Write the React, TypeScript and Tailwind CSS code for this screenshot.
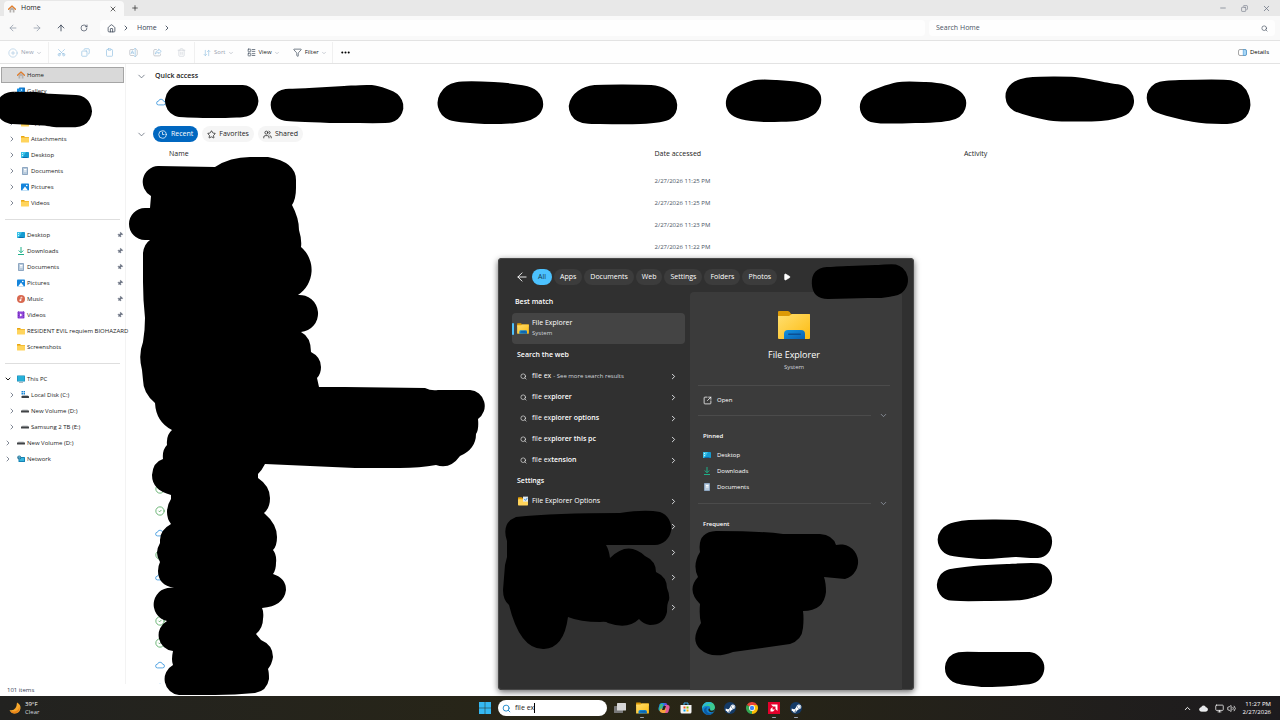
import type { ReactNode } from 'react';
import {
  ArrowDownUp,
  ArrowLeft,
  ArrowRight,
  ArrowUp,
  CheckCircle2,
  ChevronDown,
  ChevronRight,
  ChevronUp,
  CirclePlus,
  Clipboard,
  Clock3,
  Copy,
  Ellipsis,
  Filter,
  House,
  LayoutList,
  Minus,
  Monitor,
  Pin,
  Play,
  Plus,
  RotateCw,
  Scissors,
  Search,
  SquareArrowOutUpRight,
  Star,
  Trash2,
  Users,
  Volume2,
  X,
} from 'lucide-react';
import { FaSteamSymbol } from 'react-icons/fa';

type IconName =
  | 'home'
  | 'gallery'
  | 'folder'
  | 'options'
  | 'desktop'
  | 'documents'
  | 'pictures'
  | 'downloads'
  | 'music'
  | 'videos'
  | 'pc'
  | 'system-disk'
  | 'disk'
  | 'network';

function FileIcon({ name, className = 'w-2 h-2' }: { name: IconName; className?: string }) {
  const folder = (
    <>
      <path d="M0 3q0-1 1-1h5l2 2h7q1 0 1 1v3H0z" fill="#e8a50c" />
      <rect y="5" width="16" height="10" rx="1" fill="#ffd45c" />
    </>
  );
  const art: Record<IconName, ReactNode> = {
    home: (
      <>
        <path d="M3 8v7h3.500v-5h3v5H13V8L8 4z" fill="#b5b2b0" />
        <path d="M1 8.500 8 2l7 6.500" fill="none" stroke="#e07b28" strokeWidth="2.400" strokeLinejoin="round" strokeLinecap="round" />
      </>
    ),
    gallery: (
      <>
        <rect x="4" y="1" width="12" height="12" rx="1" fill="#1173c4" />
        <rect x="0" y="3" width="12" height="12" rx="1" fill="#1590e6" />
        <path d="m2 13 4-5 4 5z" fill="#fff" />
        <circle cx="9" cy="6" r="1.300" fill="#fff" />
      </>
    ),
    folder,
    options: (
      <>
        {folder}
        <rect x="8" y="1" width="8" height="8" fill="#dfe9f2" />
        <path d="m10 5 2 2 3-4" fill="none" stroke="#1e7fd0" strokeWidth="1.300" />
      </>
    ),
    desktop: (
      <>
        <rect y="2" width="16" height="12" rx="1.500" fill="#169bd0" />
        <path d="M0 3.500q0-1.500 1.500-1.500H10L3 14H1.500Q0 14 0 12.500z" fill="#3cc3e8" />
        <path d="M2 4h2v2H2zM2 8h2v2H2z" fill="#c9f3ff" />
        <path d="M3 12h10v2H3z" fill="#0b6cae" />
      </>
    ),
    documents: (
      <>
        <rect x="2" width="12" height="16" rx="1.500" fill="#8ea7c2" />
        <rect x="4" y="2" width="8" height="12" fill="#b9cbdc" />
        <path d="M6 4h5v3H6zM6 9h5v1H6z" fill="#fff" />
      </>
    ),
    pictures: (
      <>
        <rect y="1" width="16" height="14" rx="1.500" fill="#1585dc" />
        <path d="m2 15 6-8 6 8z" fill="#fff" />
        <circle cx="11.500" cy="5" r="1.600" fill="#fff" />
      </>
    ),
    downloads: (
      <path d="M8 0v11M3.500 7 8 11.500 12.500 7M2 15h12" fill="none" stroke="#1fb088" strokeWidth="2" />
    ),
    music: (
      <>
        <circle cx="8" cy="8" r="8" fill="#d8684f" />
        <path d="M8 4v6.500M8 4l3 1.500" stroke="#fff" strokeWidth="1.400" fill="none" />
        <circle cx="6.700" cy="10.500" r="1.900" fill="#fff" />
      </>
    ),
    videos: (
      <>
        <rect x="1" y="1" width="14" height="14" rx="1.500" fill="#9147d9" />
        <path d="M3 1v14M13 1v14" stroke="#6f2bb8" strokeWidth="2" strokeDasharray="2 1.500" />
        <path d="m6 5 5 3-5 3z" fill="#fff" />
      </>
    ),
    pc: (
      <>
        <rect y="1" width="16" height="12" rx="1" fill="#1583b0" />
        <rect x="1" y="2" width="14" height="10" fill="#27b0d8" />
        <path d="M4 14h8v1H4z" fill="#5b7380" />
      </>
    ),
    'system-disk': (
      <>
        <path d="M1 0h3v3H1zM5 0h3v3H5zM1 4h3v3H1zM5 4h3v3H5z" fill="#1686d9" />
        <path d="M3 8h10l3 3H1z" fill="#b8bdc2" />
        <rect x="1" y="10" width="15" height="4" rx="1" fill="#3a4047" />
      </>
    ),
    disk: (
      <>
        <path d="M3 5h10l3 3H0z" fill="#c3c6c9" />
        <rect y="7" width="16" height="4" rx="1" fill="#404346" />
      </>
    ),
    network: (
      <>
        <rect x="3" y="4" width="13" height="10" rx="1" fill="#1583b5" />
        <rect x="5" y="6" width="9" height="6" fill="#36b6de" />
        <circle cx="4.500" cy="5" r="4" fill="#256f94" />
        <path d="M1 4h7M4.500 1v8" stroke="#8bd5ea" />
      </>
    ),
  };
  return (
    <svg viewBox="0 0 16 16" className={`shrink-0 ${className}`} aria-hidden="true">
      {art[name]}
    </svg>
  );
}

function OneDriveCloud({ className }: { className: string }) {
  return (
    <svg viewBox="0 0 24 24" className={className} fill="none" stroke="currentColor" strokeWidth="2.200" aria-hidden="true">
      <path d="M6 19a4.500 4.500 0 0 1 0-9 6.300 6.300 0 0 1 12.200 0 4.500 4.500 0 0 1 0 9z" />
    </svg>
  );
}

function ExplorerIcon({ className }: { className: string }) {
  return (
    <svg viewBox="0 0 32 30" className={`shrink-0 ${className}`} aria-hidden="true">
      <defs>
        <linearGradient id="folder-front" x1="0" y1="0" x2="1" y2="1">
          <stop offset="0" stopColor="#ffdf70" />
          <stop offset="1" stopColor="#fdbb10" />
        </linearGradient>
        <linearGradient id="folder-tray" x1="0" y1="0" x2="1" y2="1">
          <stop offset="0" stopColor="#1493e0" />
          <stop offset="1" stopColor="#0a5fb0" />
        </linearGradient>
      </defs>
      <path d="M0 2q0-1 1-1h9q1.500 0 3 3H32v6H0z" fill="#dd9a06" />
      <path d="M0 6h11l3-2h17q1 0 1 1v23q0 1-1 1H1q-1 0-1-1z" fill="url(#folder-front)" />
      <path d="M6 29v-5q0-4 4-4h13q4 0 4 4v5z" fill="url(#folder-tray)" />
      <rect x="10" y="23.500" width="13" height="1.600" rx=".8" fill="#0a4f94" />
    </svg>
  );
}

interface SideItem {
  label: string;
  icon: IconName;
  nested?: boolean;
  open?: boolean;
  toggle?: boolean;
  pinned?: boolean;
}

const accountItems: SideItem[] = [
  { label: 'Gallery', icon: 'gallery' },
  { label: '', icon: 'folder' },
  { label: 'Apps', icon: 'folder', nested: true, toggle: true },
  { label: 'Attachments', icon: 'folder', nested: true, toggle: true },
  { label: 'Desktop', icon: 'desktop', nested: true, toggle: true },
  { label: 'Documents', icon: 'documents', nested: true, toggle: true },
  { label: 'Pictures', icon: 'pictures', nested: true, toggle: true },
  { label: 'Videos', icon: 'folder', nested: true, toggle: true },
];

const pinnedItems: SideItem[] = [
  { label: 'Desktop', icon: 'desktop', pinned: true },
  { label: 'Downloads', icon: 'downloads', pinned: true },
  { label: 'Documents', icon: 'documents', pinned: true },
  { label: 'Pictures', icon: 'pictures', pinned: true },
  { label: 'Music', icon: 'music', pinned: true },
  { label: 'Videos', icon: 'videos', pinned: true },
  { label: 'RESIDENT EVIL requiem BIOHAZARD', icon: 'folder' },
  { label: 'Screenshots', icon: 'folder' },
];

const driveItems: SideItem[] = [
  { label: 'This PC', icon: 'pc', toggle: true, open: true },
  { label: 'Local Disk (C:)', icon: 'system-disk', nested: true, toggle: true },
  { label: 'New Volume (D:)', icon: 'disk', nested: true, toggle: true },
  { label: 'Samsung 2 TB (E:)', icon: 'disk', nested: true, toggle: true },
  { label: 'New Volume (D:)', icon: 'disk', toggle: true },
  { label: 'Network', icon: 'network', toggle: true },
];

function SideRow({ item }: { item: SideItem }) {
  return (
    <li>
      <a href="#" className={`flex h-4 items-center text-[6px] text-[#1b1b1b] ${item.nested ? 'pl-2' : 'pl-1'}`}>
        <span className="mr-[5px] flex w-2 shrink-0 justify-center">
          {item.toggle &&
            (item.open ? (
              <ChevronDown className="h-2 w-2" strokeWidth={3} />
            ) : (
              <ChevronRight className="h-2 w-2 text-gray-500" strokeWidth={2.5} />
            ))}
        </span>
        <FileIcon name={item.icon} />
        <span className="ml-0.5 whitespace-nowrap">{item.label}</span>
        {item.pinned && <Pin className="ml-auto mr-0.5 h-1.5 w-1.5 shrink-0 rotate-45 fill-gray-500 text-gray-500" />}
      </a>
    </li>
  );
}

function Sidebar() {
  return (
    <nav className="w-[126px] shrink-0 border-r border-[#f3f3f3] pt-[3px]">
      <ul>
        <li className="px-px">
          <a href="#" className="flex h-4 items-center border border-[#a5a5a5] bg-[#d9d9d9] pl-[15px] text-[6px] text-[#1b1b1b]">
            <FileIcon name="home" />
            <span className="ml-0.5">Home</span>
          </a>
        </li>
        {accountItems.map((item, i) => (
          <SideRow key={i} item={item} />
        ))}
      </ul>
      <hr className="my-2 -mb-2 ml-[5px] mr-[5px] border-[#dedede]" />
      <ul className="pt-[15px]">
        {pinnedItems.map((item) => (
          <SideRow key={item.label} item={item} />
        ))}
      </ul>
      <hr className="my-2 -mb-2 ml-[5px] mr-[5px] border-[#dedede]" />
      <ul className="pt-[15px]">
        {driveItems.map((item, i) => (
          <SideRow key={i} item={item} />
        ))}
      </ul>
    </nav>
  );
}

function TitleBar() {
  return (
    <header className="flex h-4 shrink-0 items-center bg-[#e8e8e8] text-[7px] text-[#1b1b1b]">
      <div className="ml-1 mt-px flex h-[15px] w-[120px] items-center rounded-t bg-[#f9f9f9] pl-1">
        <FileIcon name="home" />
        <span className="ml-[5px] flex-1">Home</span>
        <button aria-label="Close tab" className="mr-[7px]">
          <X className="h-2 w-2" />
        </button>
      </div>
      <button aria-label="New tab" className="ml-[7px]">
        <Plus className="h-2 w-2" />
      </button>
      <div className="ml-auto flex items-center gap-[14px] pr-[9px] text-gray-500">
        <button aria-label="Minimize"><Minus className="h-2 w-2" /></button>
        <button aria-label="Restore"><Copy className="h-[7px] w-[7px] -scale-x-100" /></button>
        <button aria-label="Close"><X className="h-[9px] w-[9px]" /></button>
      </div>
    </header>
  );
}

function AddressBar() {
  return (
    <div className="flex h-[25px] shrink-0 items-center border-b border-[#e3e3e3] bg-[#f9f9f9] pr-[5px] text-[7px] text-gray-700">
      <div className="flex w-[100px] items-center gap-[14px] pl-2">
        <button aria-label="Back" className="text-gray-400"><ArrowLeft className="h-[10px] w-[10px]" /></button>
        <button aria-label="Forward" className="text-gray-400"><ArrowRight className="h-[10px] w-[10px]" /></button>
        <button aria-label="Up"><ArrowUp className="h-[10px] w-[10px]" /></button>
        <button aria-label="Refresh"><RotateCw className="h-2 w-2" /></button>
      </div>
      <div className="mr-1 flex h-4 flex-[818] items-center rounded-sm bg-[#fefefe] pl-[7px]">
        <House className="h-[9px] w-[9px]" />
        <ChevronRight className="ml-1.5 h-2 w-2" strokeWidth={2.5} />
        <a href="#" className="ml-[7px]">Home</a>
        <ChevronRight className="ml-1.5 h-2 w-2" strokeWidth={2.5} />
      </div>
      <label className="flex h-4 flex-[332] items-center rounded-sm bg-[#fefefe] px-[7px]">
        <input
          type="text"
          aria-label="Search Home"
          placeholder="Search Home"
          className="min-w-0 flex-1 outline-none placeholder:text-gray-600"
        />
        <Search className="h-[7px] w-[7px]" />
      </label>
    </div>
  );
}

function ToolMenu({ icon, label, muted = false }: { icon: ReactNode; label: string; muted?: boolean }) {
  return (
    <button className={`flex items-center ${muted ? 'text-gray-400' : 'text-[#1b1b1b]'}`}>
      {icon}
      <span className="ml-[3px]">{label}</span>
      <ChevronDown className="ml-0.5 h-1.5 w-1.5 text-gray-400" />
    </button>
  );
}

function RenameIcon() {
  return (
    <svg viewBox="0 0 24 24" className="h-[9px] w-[9px]" fill="none" stroke="currentColor" strokeWidth="2">
      <path d="M14 4H5Q2 4 2 7v10q0 3 3 3h9M19 4q3 0 3 3v10q0 3-3 3" stroke="#b9bec4" />
      <path d="M14 1h5M16.500 1v22M14 23h5M5 16l4-9 4 9M6.500 13h5" />
    </svg>
  );
}

function ShareIcon() {
  return (
    <svg viewBox="0 0 24 24" className="h-[9px] w-[9px]" fill="none" stroke="currentColor" strokeWidth="2">
      <path d="M10 4H5Q2 4 2 7v11q0 3 3 3h12q3 0 3-3v-3" stroke="#b9bec4" />
      <path d="M15 3l7 6-7 6v-3q-6 0-9 4 1-9 9-10z" strokeLinejoin="round" />
    </svg>
  );
}

function Toolbar() {
  return (
    <div className="flex h-[23px] shrink-0 items-center border-b border-[#e3e3e3] bg-[#fefefe] pt-px text-[6px]">
      <div className="flex h-full w-[49px] items-center border-r border-[#f0f0f0] pl-2">
        <ToolMenu muted label="New" icon={<CirclePlus className="h-[10px] w-[10px] text-[#a9c9e2]" strokeWidth={1.5} />} />
      </div>
      <div className="flex h-full w-[146px] items-center gap-[15px] border-r border-[#f0f0f0] pl-2 text-[#9cc5e4]">
        <button aria-label="Cut"><Scissors className="h-[9px] w-[9px] -rotate-90" /></button>
        <button aria-label="Copy"><Copy className="h-[9px] w-[9px] -scale-x-100" /></button>
        <button aria-label="Paste"><Clipboard className="h-[9px] w-[9px]" /></button>
        <button aria-label="Rename"><RenameIcon /></button>
        <button aria-label="Share"><ShareIcon /></button>
        <button aria-label="Delete" className="text-gray-300"><Trash2 className="h-[9px] w-[9px]" /></button>
      </div>
      <div className="flex h-full w-[138px] items-center gap-[13px] border-r border-[#f0f0f0] pl-2">
        <ToolMenu muted label="Sort" icon={<ArrowDownUp className="h-2 w-2 text-[#9cc5e4]" />} />
        <ToolMenu label="View" icon={<LayoutList className="h-[9px] w-[9px] text-gray-600" />} />
        <ToolMenu label="Filter" icon={<Filter className="h-[9px] w-[9px] text-gray-600" />} />
      </div>
      <button aria-label="More" className="ml-[7px]">
        <Ellipsis className="h-[11px] w-[11px]" strokeWidth={2.5} />
      </button>
      <button className="ml-auto mr-[11px] flex items-center gap-[3px]">
        <svg viewBox="0 0 18 14" className="h-[7px] w-[9px]" fill="none">
          <rect x="1" y="1" width="16" height="12" rx="3" stroke="#777" strokeWidth="1.300" />
          <path d="M10.500 1H14q3 0 3 3v6q0 3-3 3h-3.500z" fill="#a8d6f5" stroke="#2087d2" />
        </svg>
        Details
      </button>
    </div>
  );
}

interface RecentRow {
  status?: 'synced' | 'cloud';
  date?: string;
}

const recentRows: RecentRow[] = [
  { date: '2/27/2026 11:25 PM' },
  { date: '2/27/2026 11:25 PM' },
  { date: '2/27/2026 11:23 PM' },
  { date: '2/27/2026 11:22 PM' },
  ...Array.from({ length: 10 }, () => ({})),
  { status: 'synced' },
  { status: 'synced' },
  { status: 'cloud' },
  { status: 'synced' },
  { status: 'cloud' },
  {},
  { status: 'synced' },
  { status: 'synced' },
  { status: 'cloud' },
  { status: 'cloud' },
];

function FileList() {
  return (
    <main className="min-w-0 flex-1 overflow-hidden pl-[10px] text-[7px] text-[#1b1b1b]">
      <h2 className="flex h-[25px] items-center font-semibold">
        <button aria-label="Collapse quick access" className="mr-2">
          <ChevronDown className="h-[11px] w-[11px] text-gray-600" strokeWidth={1.5} />
        </button>
        Quick access
      </h2>
      <div className="flex h-[37px] items-start pl-5 pt-2">
        <OneDriveCloud className="h-[10px] w-[10px] text-[#4a9fe0]" />
      </div>
      <div className="flex h-4 items-center">
        <button aria-label="Collapse recent" className="mr-1.5">
          <ChevronDown className="h-[11px] w-[11px] text-gray-600" strokeWidth={1.5} />
        </button>
        <div className="flex gap-1">
          <button className="flex h-4 items-center gap-1 rounded-full bg-[#0067c0] px-[5px] text-white">
            <Clock3 className="h-[9px] w-[9px]" /> Recent
          </button>
          <button className="flex h-4 items-center gap-[3px] rounded-full bg-[#f5f5f5] px-[5px]">
            <Star className="h-[9px] w-[9px]" /> Favorites
          </button>
          <button className="flex h-4 items-center gap-[3px] rounded-full bg-[#f5f5f5] px-[5px]">
            <Users className="h-[9px] w-[9px]" /> Shared
          </button>
        </div>
      </div>
      <table className="ml-[19px] w-[calc(100%-19px)] table-fixed text-left">
        <thead>
          <tr className="h-7">
            <th className="w-[44.4%] pb-1 pl-[14px] font-normal">Name</th>
            <th className="w-[27.5%] pb-1 font-normal">Date accessed</th>
            <th className="pb-1 font-normal">Activity</th>
          </tr>
        </thead>
        <tbody>
          {recentRows.map((row, i) => (
            <tr key={i} className="h-[22px]">
              <td>
                {row.status === 'synced' && <CheckCircle2 className="h-[10px] w-[10px] text-[#3f9e4d]" strokeWidth={1.8} />}
                {row.status === 'cloud' && <OneDriveCloud className="h-[10px] w-[10px] text-[#4a9fe0]" />}
              </td>
              <td className="text-[6px] text-gray-600">{row.date}</td>
              <td />
            </tr>
          ))}
        </tbody>
      </table>
    </main>
  );
}

type Point = [number, number];

// Closed curve through every point, with gently rounded corners.
function smoothPath(points: Point[]) {
  const n = points.length;
  const segments = points.map((p1, i) => {
    const p0 = points[(i + n - 1) % n];
    const p2 = points[(i + 1) % n];
    const p3 = points[(i + 2) % n];
    const c1 = [p1[0] + (p2[0] - p0[0]) / 8, p1[1] + (p2[1] - p0[1]) / 8];
    const c2 = [p2[0] - (p3[0] - p1[0]) / 8, p2[1] - (p3[1] - p1[1]) / 8];
    return `C${c1.join(' ')} ${c2.join(' ')} ${p2.join(' ')}`;
  });
  return `M${points[0].join(' ')}${segments.join('')}Z`;
}

// Marker strokes that hide private file names in the explorer window.
const markerStrokes: Point[][] = [
  [[13, 108], [35, 108], [55, 111], [75, 111]],
  [[181, 101], [205, 101], [242, 101], [225, 102], [210, 102]],
  [[287, 105], [310, 104], [345, 102], [370, 101], [387, 107], [350, 107], [330, 107]],
  [[455, 105], [459, 98], [493, 98], [520, 101], [527, 104], [515, 107], [485, 108]],
  [[585, 107], [596, 101], [650, 101], [661, 106], [640, 108], [600, 108]],
  [[742, 103], [757, 96], [776, 96], [797, 98], [805, 101], [795, 105], [765, 106]],
  [[876, 107], [900, 98], [925, 98], [942, 100], [950, 104], [940, 106], [915, 107]],
  [[1022, 97], [1034, 93], [1074, 93], [1102, 98], [1118, 101], [1100, 105], [1055, 105]],
  [[1163, 98], [1180, 96], [1228, 96], [1234, 106], [1222, 108], [1195, 106]],
  [[954, 540], [970, 536], [1016, 536], [1036, 542], [1015, 541], [985, 543]],
  [[953, 585], [975, 582], [1008, 580], [1036, 579], [1020, 584], [985, 585]],
  [[961, 668], [990, 668], [1028, 668], [1010, 670], [985, 671]],
];

const markerColumn =
  'M151 196A16 16 0 0 1 158 166L215 167Q230 157 250 157L268 157Q296 162 296 180V188Q296 199 292 205Q299 218 299 230Q302 240 301 247A30 30 0 0 1 298 295A18 18 0 0 1 301 332Q311 337 311 352Q321 357 321 367Q321 374 317 378L319 387H345L425 388Q431 391 438 390H470A16 16 0 0 1 478 419Q479 430 476 434Q476 449 460 456Q450 470 436 465Q420 468 400 468H355L265 464Q262 470 258 474V478Q270 486 270 498Q270 508 264 513Q277 524 277 537Q277 546 273 550Q277 555 276 563Q276 570 273 574Q286 578 286 590Q284 606 262 608Q264 612 263 619Q263 628 256 634L261 640Q273 645 273 657Q272 664 268 669Q269 672 269 679Q267 691 255 693Q235 695 215 695H179A16 16 0 0 1 173 665Q171 660 173 651A16 16 0 0 1 167 621A16 16 0 0 1 174 588Q158 585 158 571Q158 566 160 562Q154 553 160 543V540Q160 530 171 524Q167 519 167 512Q167 505 171 499V495Q152 490 152 475Q153 462 163 459Q162 450 167 445Q166 435 172 430Q156 422 155 403Q143 393 143 380L142 370Q138 355 143 342Q145 330 145 318Q143 300 143 282V253Q144 244 150 240H145A16 16 0 0 1 145 208H150Z';

function MarkerLayer() {
  return (
    <svg width="1280" height="720" className="pointer-events-none absolute left-0 top-0" aria-hidden="true">
      <g stroke="#000" strokeWidth="32" strokeLinejoin="round" strokeLinecap="round">
        {markerStrokes.map((points, i) => (
          <path key={i} d={smoothPath(points)} />
        ))}
      </g>
      <path d={markerColumn} />
    </svg>
  );
}

function PopupMarkers() {
  return (
    <svg viewBox="498 258 416 432" className="pointer-events-none absolute left-0 top-0 h-[432px] w-[416px]" aria-hidden="true">
      <path
        d={smoothPath([[828, 283], [850, 282], [876, 281], [892, 280], [880, 282], [868, 282]])}
        stroke="#000"
        strokeWidth="32"
        strokeLinejoin="round"
      />
      <path d="M507 541Q501 523 516 517Q555 513 620 513Q645 509 660 512A17 17 0 0 1 655 545H606Q609 550 610 558Q628 540 645 556Q656 561 656 572Q667 577 667 588Q670 595 669 600Q667 603 667 612Q664 625 650 625Q643 624 639 619Q628 630 608 623Q606 621 600 622Q580 622 568 617Q564 648 544 649Q520 650 509 605Q503 600 503 590L505 565L507 557Z" />
      <path d="M700 552Q697 532 716 531Q760 531 783 534H820Q833 535 836 545A17 17 0 0 1 845 579L824 577Q826 583 826 592Q824 611 803 611Q804 618 803 628Q802 640 790 644L733 652Q712 660 700 649Q690 640 701 623Q699 616 700 604Q686 590 698 577Q692 565 700 552Z" />
    </svg>
  );
}

const filters = ['All', 'Apps', 'Documents', 'Web', 'Settings', 'Folders', 'Photos'];
const suggestions = ['plorer', 'plorer options', 'plorer this pc', 'tension'];

function Chevron() {
  return <ChevronRight className="ml-auto h-[9px] w-[9px] shrink-0 text-gray-200" strokeWidth={2.5} />;
}

function SectionRule() {
  return (
    <div className="flex h-2 items-center">
      <hr className="flex-1 border-[#4b4b4b]" />
      <button aria-label="Expand section" className="ml-2 mr-0.5">
        <ChevronDown className="h-[9px] w-[9px] text-gray-400" />
      </button>
    </div>
  );
}

function SearchPopup() {
  return (
    <section
      aria-label="Search results"
      className="absolute bottom-[30px] left-[calc(50%-142px)] flex h-[432px] w-[416px] flex-col rounded bg-[#303030] text-[7px] text-white shadow-[0_2px_6px_rgba(0,0,0,0.6)] ring-1 ring-inset ring-[#484848]"
    >
      <div className="flex h-[34px] shrink-0 items-center pl-[17px] pt-1">
        <button aria-label="Back" className="mr-[3px]">
          <ArrowLeft className="h-[14px] w-[14px]" strokeWidth={1.5} />
        </button>
        <div className="flex gap-0.5">
          {filters.map((name) => (
            <button
              key={name}
              className={`h-4 rounded-full px-1.5 ${name === 'All' ? 'bg-[#4cc2ff] text-[#12394d]' : 'bg-[#3c3c3c]'}`}
            >
              {name}
            </button>
          ))}
        </div>
        <button aria-label="More filters" className="ml-1.5">
          <Play className="h-2 w-2 fill-white" />
        </button>
      </div>
      <div className="flex min-h-0 flex-1 pr-3">
        <div className="w-48 pl-[14px] pr-[5px] font-semibold">
          <h3 className="flex h-[21px] items-center pl-[3px]">Best match</h3>
          <button className="flex h-[31px] w-full items-center rounded-sm bg-[#444] text-left font-normal">
            <span className="h-3 w-0.5 rounded-full bg-[#4cc2ff]" />
            <ExplorerIcon className="ml-[3px] mr-[3px] h-[11px] w-3" />
            <span className="flex flex-col pb-0.5">
              <span className="leading-[10px]">File Explorer</span>
              <span className="text-[6px] leading-[10px] text-gray-300">System</span>
            </span>
          </button>
          <h3 className="flex h-[22px] items-center pl-[5px]">Search the web</h3>
          <ul>
            <li>
              <a href="#" className="flex h-[21px] items-center pl-2 pr-[7px]">
                <Search className="mr-[5px] h-[7px] w-[7px]" />
                <span className="font-normal">file ex</span>
                <span className="ml-0.5 text-[6px] font-normal text-gray-300">- See more search results</span>
                <Chevron />
              </a>
            </li>
            {suggestions.map((rest) => (
              <li key={rest}>
                <a href="#" className="flex h-[21px] items-center pl-2 pr-[7px]">
                  <Search className="mr-[5px] h-[7px] w-[7px]" />
                  <span>
                    <span className="font-normal">file ex</span>
                    {rest}
                  </span>
                  <Chevron />
                </a>
              </li>
            ))}
          </ul>
          <h3 className="flex h-5 items-center pl-[5px]">Settings</h3>
          <ul>
            <li>
              <a href="#" className="flex h-5 items-center pl-1.5 pr-[7px] font-normal">
                <FileIcon name="options" className="mr-1 h-[10px] w-[10px]" />
                File Explorer Options
                <Chevron />
              </a>
            </li>
            <li className="flex h-[30px] items-center pr-[7px]"><Chevron /></li>
            <li className="flex h-[22px] items-center pr-[7px]"><Chevron /></li>
            <li className="flex h-[28px] items-center pr-[7px]"><Chevron /></li>
            <li className="flex h-8 items-center pr-[7px]"><Chevron /></li>
          </ul>
        </div>
        <div className="min-w-0 flex-1 rounded-t bg-[#3b3b3b] pl-2 pr-3 text-[6px]">
          <div className="flex flex-col items-center pt-[18px]">
            <ExplorerIcon className="h-[30px] w-8" />
            <h2 className="mt-[9px] text-[9px] leading-3">File Explorer</h2>
            <p className="mt-0.5 leading-[9px] text-gray-300">System</p>
          </div>
          <hr className="mt-[13px] border-[#4b4b4b]" />
          <button className="flex h-[25px] items-center pl-[5px] pt-[3px]">
            <SquareArrowOutUpRight className="mr-[5px] h-[9px] w-[9px]" />
            Open
          </button>
          <SectionRule />
          <h3 className="mt-3 flex h-[11px] items-center pl-[5px] font-semibold">Pinned</h3>
          <ul className="mb-1 mt-[5px]">
            {(['Desktop', 'Downloads', 'Documents'] as const).map((label) => (
              <li key={label}>
                <a href="#" className="flex h-4 items-center gap-1.5 pl-[5px]">
                  <FileIcon name={label.toLowerCase() as IconName} />
                  {label}
                </a>
              </li>
            ))}
          </ul>
          <SectionRule />
          <h3 className="mt-3 flex h-[11px] items-center pl-[5px] font-semibold">Frequent</h3>
        </div>
      </div>
      <PopupMarkers />
    </section>
  );
}

function SteamIcon() {
  return (
    <span className="flex h-3 w-3 items-center justify-center rounded-full bg-[#143a66] text-white">
      <FaSteamSymbol className="h-[11px] w-[11px]" />
    </span>
  );
}

const taskApps: { name: string; running?: boolean; icon: ReactNode }[] = [
  {
    name: 'Task view',
    icon: (
      <svg viewBox="0 0 24 24" className="h-3 w-3">
        <rect x="0" y="8" width="18" height="14" rx="1" fill="#777" />
        <rect x="6" y="2" width="18" height="15" rx="1" fill="#d6d6d6" />
      </svg>
    ),
  },
  { name: 'File Explorer', running: true, icon: <ExplorerIcon className="h-3 w-[13px]" /> },
  {
    name: 'Copilot',
    icon: (
      <svg viewBox="0 0 24 24" className="h-3 w-3">
        <path d="M7 2h8l-5 16H5q-5 0-4-6l2-7q1-3 4-3z" fill="#1b8fe0" />
        <path d="M2 14 5 4h5L7 18H5q-3 0-3-4z" fill="#43bd7a" />
        <path d="M9 22h8q3 0 4-3l2-7q1-6-4-6h-5z" fill="#e0589a" />
        <path d="M9 22h5l3-9H8q-4 0-5 5 2 4 6 4z" fill="#f5a43c" />
        <path d="m11 8-3 8h5l3-8z" fill="#272514" />
        <path d="M13 2h2q3 0 4 4h-5q-2 0-3 3z" fill="#5b50d8" />
      </svg>
    ),
  },
  {
    name: 'Microsoft Store',
    icon: (
      <svg viewBox="0 0 24 24" className="h-3 w-3">
        <path d="M8 6V2h8v4" fill="none" stroke="#3ca8e8" strokeWidth="2" />
        <path d="M1 6h22v14q0 3-3 3H4q-3 0-3-3z" fill="#f4f4f4" />
        <path d="M7 9h4v4H7z" fill="#f25022" />
        <path d="M13 9h4v4h-4z" fill="#7fba00" />
        <path d="M7 15h4v4H7z" fill="#00a4ef" />
        <path d="M13 15h4v4h-4z" fill="#ffb900" />
      </svg>
    ),
  },
  {
    name: 'Edge',
    icon: (
      <svg viewBox="0 0 24 24" className="h-[13px] w-[13px]">
        <circle cx="12" cy="12" r="12" fill="#1384d0" />
        <path d="M0 11Q2 0 12 0q11 0 12 10 0 6-6 6-4 0-3-3 1-6-5-6Q3 7 0 11z" fill="#3ccb90" />
        <path d="M0 12Q2 0 12 0q5 0 8 3Q8 2 0 12z" fill="#2bb5d8" />
        <path d="M10 10q-4 4 0 9 5 4 11 0-4 6-11 5Q2 20 4 13q2-4 6-3z" fill="#0c59a4" />
        <path d="M15 13q-1 3 3 3 5 0 6-5 1 7-6 8-7 0-6-6 1-2 3 0z" fill="#272514" />
      </svg>
    ),
  },
  { name: 'Steam', icon: <SteamIcon /> },
  {
    name: 'Chrome',
    icon: (
      <svg viewBox="0 0 24 24" className="h-3 w-3">
        <path d="M12 12 1.600 6A12 12 0 0 1 22.400 6z" fill="#ea4335" />
        <path d="M12 12 22.400 6A12 12 0 0 1 12 24z" fill="#fbbc05" />
        <path d="M12 12v12A12 12 0 0 1 1.600 6z" fill="#34a853" />
        <path d="M12 6h10.400L17 15z" fill="#fbbc05" />
        <circle cx="12" cy="12" r="5.800" fill="#fff" />
        <circle cx="12" cy="12" r="4.400" fill="#4285f4" />
      </svg>
    ),
  },
  {
    name: 'AMD Software',
    running: true,
    icon: (
      <svg viewBox="0 0 24 24" className="h-3 w-3">
        <path d="M0 0h24v24H0z" fill="#e4002b" />
        <path d="M6 5h13v13l-4-4V9h-5zM5 14l4-4v5h5l-4 4H5z" fill="#fff" />
      </svg>
    ),
  },
  { name: 'Steam window', running: true, icon: <SteamIcon /> },
];

function Taskbar() {
  return (
    <footer className="grid h-6 shrink-0 grid-cols-[1fr_auto_1fr] items-center bg-linear-to-r from-[#222220] via-[#292615] to-[#1d1b1e] text-[6px] text-white">
      <button className="flex items-center gap-1 justify-self-start pl-[9px] text-left">
        <svg viewBox="0 0 24 24" className="h-3 w-3">
          <path d="M16 1q8 4 7 12-2 10-12 10Q4 23 1 16q14 3 15-15z" fill="#f7a82c" />
          <path d="M3 18q14 4 18-9 2 12-10 14-5 0-8-5z" fill="#e98419" />
        </svg>
        <span className="leading-2">
          39°F
          <br />
          <span className="text-gray-300">Clear</span>
        </span>
      </button>
      <div className="flex items-center pl-1.5">
        <button aria-label="Start" className="mr-[7px]">
          <svg viewBox="0 0 24 24" className="h-3 w-3">
            <path d="M0 0h11.500v11.500H0zM12.500 0H24v11.500H12.500zM0 12.500h11.500V24H0zM12.500 12.500H24V24H12.500z" fill="#35b8f2" />
          </svg>
        </button>
        <label className="mr-0.5 flex h-4 w-[109px] items-center rounded-full bg-white pl-1 text-[7px] text-[#1b1b1b]">
          <Search className="mr-1 h-[9px] w-[9px] text-[#1c88c9]" strokeWidth={2.5} />
          <span className="relative flex-1">
            <input aria-label="Search" defaultValue="file ex" className="w-20 outline-none" />
            <span className="absolute left-[19px] top-0 h-[10px] w-px bg-black" />
          </span>
        </label>
        {taskApps.map((app) => (
          <button key={app.name} aria-label={app.name} className="relative flex h-6 w-[22px] items-center justify-center">
            {app.icon}
            {app.running && <span className="absolute bottom-0.5 left-[9px] h-px w-1 rounded bg-gray-400" />}
          </button>
        ))}
      </div>
      <div className="flex items-center justify-self-end pr-[9px]">
        <ChevronUp className="mr-[7px] h-[9px] w-[9px]" strokeWidth={2.5} />
        <OneDriveCloud className="mr-[7px] h-[9px] w-[9px] fill-gray-200" />
        <Monitor className="mr-[3px] h-[9px] w-[9px]" />
        <Volume2 className="mr-[7px] h-[9px] w-[9px]" />
        <time className="text-right leading-2">
          11:27 PM
          <br />
          2/27/2026
        </time>
      </div>
    </footer>
  );
}

export default function App() {
  return (
    <div className="relative flex h-screen flex-col overflow-hidden bg-white font-['Open_Sans',sans-serif]">
      <TitleBar />
      <AddressBar />
      <Toolbar />
      <div className="flex min-h-0 flex-1">
        <Sidebar />
        <FileList />
      </div>
      <div className="flex h-3 shrink-0 items-center pl-[7px] text-[6px] text-gray-700">101 items</div>
      <Taskbar />
      <MarkerLayer />
      <SearchPopup />
    </div>
  );
}
